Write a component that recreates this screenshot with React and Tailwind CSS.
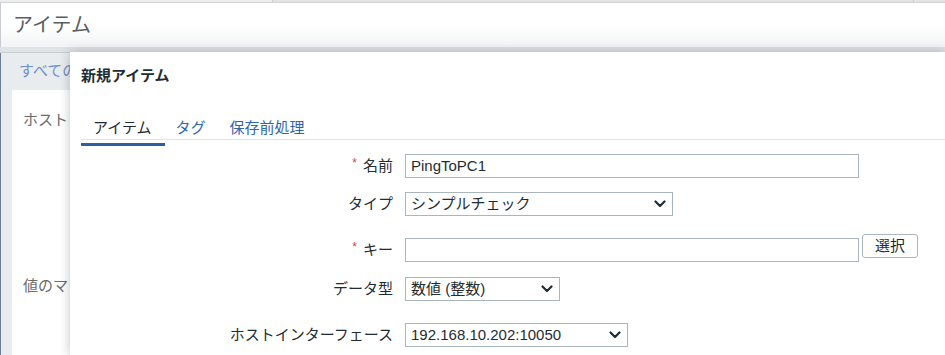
import React from "react";

const font = "font-['Liberation_Sans','Noto_Sans_CJK_JP',sans-serif]";

const Chevron = () => (
  <svg width="12" height="8" viewBox="0 0 12 8" className="shrink-0">
    <path d="M1.5 1.5 L6 6 L10.5 1.5" fill="none" stroke="#1f2c33" strokeWidth="2.2" strokeLinecap="round" strokeLinejoin="round" />
  </svg>
);

const Label = ({ children, required }) => (
  <div className="flex h-[24px] w-[323px] shrink-0 items-center justify-end text-[15px] text-[#1f2c33]">
    {required && <span className="mr-[6px] -translate-y-[3px] text-[12px] text-[#d64541]">*</span>}
    {children}
  </div>
);

const TextInput = ({ value, width }) => (
  <div className={`ml-3 flex h-[24px] items-center border border-[#a9b6c1] bg-white px-[5px] text-[15px] text-[#1f2c33] ${width}`}>
    {value}
  </div>
);

const Select = ({ value, width }) => (
  <div className={`ml-3 flex h-[24px] items-center justify-between border border-[#a9b6c1] bg-white pl-[5px] pr-[6px] text-[15px] text-[#1f2c33] ${width}`}>
    <span>{value}</span>
    <Chevron />
  </div>
);

export default function App() {
  return (
    <div className={`relative h-[355px] w-[945px] overflow-hidden bg-[#e9ecee] leading-[20px] ${font}`}>
      {/* top strip */}
      <div className="flex h-[3px] border-b border-[#d2d4d6] bg-[#ededed]">
        <div className="w-[273px] border-r border-[#cdcdcd]" />
        <div className="w-[641px] border-r border-[#cdcdcd] bg-[#e3e3e3]" />
        <div className="flex-1 bg-[#e3e3e3]" />
      </div>

      {/* page header */}
      <div className="flex h-[44px] items-center border-l border-[#c9cdd1] bg-gradient-to-b from-white from-50% to-[#f2f4f5] pl-3 text-[20px] text-[#595e62]">
        アイテム
      </div>
      <div className="h-[6px] border-b border-[#c7cfd2] bg-[#e0e3e6]" />

      {/* page body behind dialog */}
      <div className="flex h-full border-l border-[#6d7d96]">
        <div className="flex-1">
          <div className="pl-[18px] pt-[8px] text-[15px] text-[#6d8fc9]">すべての</div>
          <div className="ml-[11px] mt-[9px] h-full bg-white pl-[11px] pt-[20px] text-[15px] text-[#6b6b6b]">
            <div>ホスト</div>
            <div className="mt-[146px]">値のマ</div>
          </div>
        </div>
      </div>

      {/* dialog */}
      <div className="absolute bottom-0 left-[70px] right-0 top-[52px] bg-white shadow-[0_0_10px_rgba(40,50,60,0.3)]">
        <div className="pl-[11px] pt-[14px] text-[15px] font-bold text-[#1f2c33]">新規アイテム</div>

        <div className="ml-[11px] mt-[32px] flex border-b border-[#e3e5e7] text-[15px]">
          <div className="h-[21px] px-3 text-[#1f2c33]">アイテム</div>
          <div className="h-[21px] px-3 text-[#2f63ad]">タグ</div>
          <div className="h-[21px] px-3 text-[#2f63ad]">保存前処理</div>
        </div>
        <div className="ml-[11px] mt-[3px] h-[3px] w-[84px] bg-[#2f5ea6]" />

        <div className="flex flex-col">
          <div className="mt-[8px] flex items-center">
            <Label required>名前</Label>
            <TextInput value="PingToPC1" width="w-[454px]" />
          </div>

          <div className="mt-[14px] flex items-center">
            <Label>タイプ</Label>
            <Select value="シンプルチェック" width="w-[268px]" />
          </div>

          <div className="mt-[18px] flex items-start">
            <div className="mt-[4px]">
              <Label required>キー</Label>
            </div>
            <div className="mt-[4px]">
              <TextInput value="" width="w-[454px]" />
            </div>
            <button className="ml-[3px] h-[24px] w-[56px] rounded-[3px] border border-[#aab7c0] bg-white text-[15px] text-[#1f2c33]">
              選択
            </button>
          </div>

          <div className="mt-[15px] flex items-center">
            <Label>データ型</Label>
            <Select value="数値 (整数)" width="w-[155px]" />
          </div>

          <div className="mt-[22px] flex items-center">
            <Label>ホストインターフェース</Label>
            <Select value="192.168.10.202:10050" width="w-[223px]" />
          </div>
        </div>
      </div>
    </div>
  );
}
